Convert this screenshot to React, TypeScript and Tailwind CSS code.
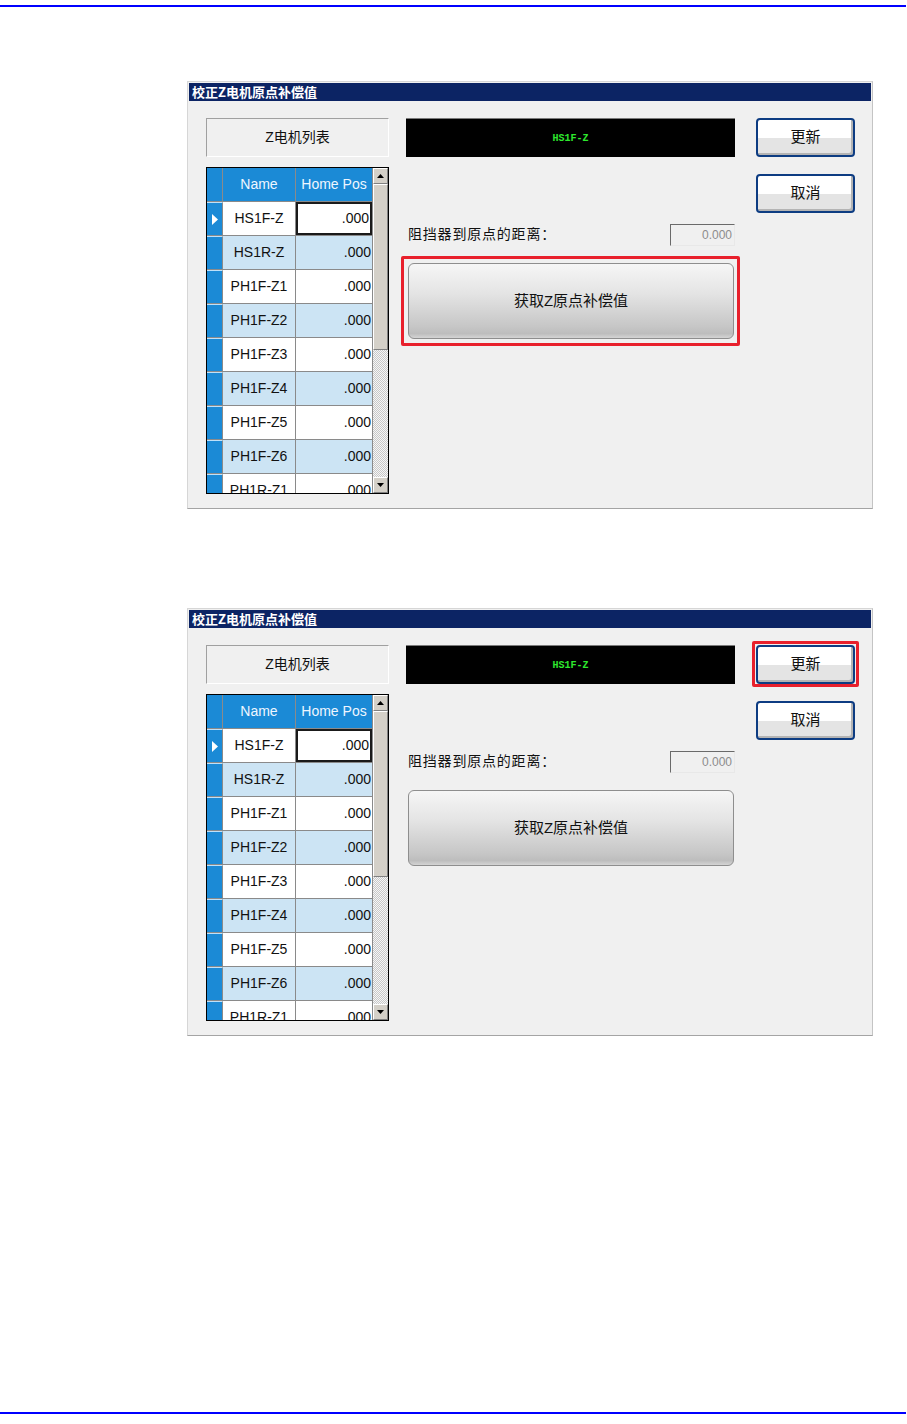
import React from "react";

const CJK = "font-['Liberation_Sans','Noto_Sans_CJK_SC',sans-serif]";

const rows = [
  "HS1F-Z",
  "HS1R-Z",
  "PH1F-Z1",
  "PH1F-Z2",
  "PH1F-Z3",
  "PH1F-Z4",
  "PH1F-Z5",
  "PH1F-Z6",
  "PH1R-Z1",
];

function Arrow({ up }: { up: boolean }) {
  return (
    <div className="h-[16px] w-full shrink-0 bg-[#d4d0c8] border border-t-white border-l-white border-r-[#808080] border-b-[#808080] flex items-center justify-center">
      <svg width="7" height="4" viewBox="0 0 7 4">
        {up ? <polygon points="3.5,0 7,4 0,4" fill="#000" /> : <polygon points="0,0 7,0 3.5,4" fill="#000" />}
      </svg>
    </div>
  );
}

function Grid() {
  return (
    <div className="w-[183px] h-[327px] border border-black flex overflow-hidden bg-white">
      <div className="flex-1 flex flex-col overflow-hidden">
        <div className="h-[34px] shrink-0 flex border-b border-[#8a8a8a]">
          <div className="w-[16px] shrink-0 bg-[#1b8ad6] border-r border-[#8a8a8a]" />
          <div className="w-[73px] shrink-0 bg-[#1b8ad6] border-r border-[#8a8a8a] flex items-center justify-center text-[14px] text-[#eef6ff] font-['Liberation_Sans',sans-serif]">
            Name
          </div>
          <div className="flex-1 bg-[#1b8ad6] flex items-center justify-center text-[14px] text-[#eef6ff] font-['Liberation_Sans',sans-serif] whitespace-nowrap">
            Home Pos
          </div>
        </div>
        {rows.map((r, i) => {
          const blue = i % 2 === 1;
          return (
            <div key={r} className="h-[34px] shrink-0 flex border-b border-[#8a8a8a]">
              <div className="w-[16px] shrink-0 bg-[#1b8ad6] border-r border-[#8a8a8a] border-t border-t-[#bfe0f8] flex items-center justify-center">
                {i === 0 && (
                  <svg width="6" height="11" viewBox="0 0 6 11">
                    <polygon points="0,0 6,5.5 0,11" fill="#fff" />
                  </svg>
                )}
              </div>
              <div
                className={`w-[73px] shrink-0 border-r border-[#8a8a8a] flex items-center justify-center text-[14px] text-[#111] font-['Liberation_Sans',sans-serif] ${
                  blue ? "bg-[#cce4f4]" : "bg-white"
                }`}
              >
                {r}
              </div>
              <div
                className={`flex-1 flex items-center justify-end pr-[1px] text-[14px] text-[#111] font-['Liberation_Sans',sans-serif] ${
                  blue ? "bg-[#cce4f4]" : "bg-white"
                } ${i === 0 ? "border-2 border-[#1a1a1a]" : ""}`}
              >
                .000
              </div>
            </div>
          );
        })}
      </div>
      <div className="w-[16px] shrink-0 flex flex-col border-l border-[#8a8a8a] bg-[repeating-conic-gradient(#c8c8c8_0_25%,#f6f6f6_0_50%)] bg-[length:2px_2px]">
        <Arrow up />
        <div className="h-[166px] shrink-0 bg-[#d4d0c8] border border-t-white border-l-white border-r-[#808080] border-b-[#808080]" />
        <div className="flex-1" />
        <Arrow up={false} />
      </div>
    </div>
  );
}

function SmallButton({ label, highlight }: { label: string; highlight?: boolean }) {
  return (
    <div className="relative w-[99px] h-[39px]">
      <div
        className={`w-full h-full rounded-[4px] border-2 border-[#0d3c82] bg-[linear-gradient(#ffffff_0,#ffffff_52%,#e4e4e4_52%,#e4e4e4_100%)] shadow-[inset_-2px_-2px_0_#b4b4b4] flex items-center justify-center text-[15px] text-[#111] ${CJK}`}
      >
        {label}
      </div>
      {highlight && (
        <div className="absolute left-[-4px] right-[-4px] top-[-4px] bottom-[-3px] border-[3px] border-[#e8202c] rounded-[2px]" />
      )}
    </div>
  );
}

function Dialog({ hlBig, hlUpdate }: { hlBig?: boolean; hlUpdate?: boolean }) {
  return (
    <div className="w-[686px] h-[428px] border border-[#d6d6d6] border-b-[#a4a4a4] border-r-[#c4c4c4] bg-[#f0f0f0] p-[1px] flex flex-col">
      <div className="h-[18px] shrink-0 bg-[#0c2464] flex items-center pl-[3px] pb-[2px] text-[13px] font-bold text-white font-['Noto_Sans_CJK_SC',sans-serif] leading-none">
        校正Z电机原点补偿值
      </div>
      <div className="flex pl-[17px] pt-[17px]">
        <div className="w-[183px] shrink-0 flex flex-col gap-[10px]">
          <div
            className={`h-[39px] border border-t-[#a0a0a0] border-l-[#a0a0a0] border-r-white border-b-white flex items-center justify-center text-[14px] text-[#111] ${CJK}`}
          >
            Z电机列表
          </div>
          <Grid />
        </div>
        <div className="w-[329px] shrink-0 ml-[17px] flex flex-col">
          <div className="h-[39px] bg-black border-t border-[#7a7a7a] flex items-center justify-center text-[10px] font-bold text-[#2ee82e] font-['Liberation_Mono',monospace]">
            HS1F-Z
          </div>
          <div className="mt-[67px] h-[22px] flex items-center justify-between">
            <div className="pl-[2px] pb-[4px] text-[14px] text-[#111] font-['Noto_Sans_CJK_SC',sans-serif] tracking-[0.8px]">
              阻挡器到原点的距离：
            </div>
            <div className="w-[65px] h-[22px] border border-t-[#6a6a6a] border-l-[#6a6a6a] border-r-[#e8e8e8] border-b-[#e8e8e8] bg-[#f0f0f0] flex items-center justify-end pr-[2px] text-[12px] text-[#8c8c8c] font-['Liberation_Sans',sans-serif]">
              0.000
            </div>
          </div>
          <div className="mt-[17px] ml-[2px] mr-[1px] relative h-[76px]">
            <div
              className={`h-full rounded-[6px] border border-[#8e8e8e] bg-[linear-gradient(#f6f6f6_0%,#e4e4e4_40%,#c6c6c6_85%,#bdbdbd_94%,#d4d4d4_100%)] flex items-center justify-center text-[15px] text-[#111] ${CJK}`}
            >
              获取Z原点补偿值
            </div>
            {hlBig && (
              <div className="absolute left-[-7px] right-[-6px] top-[-7px] bottom-[-7px] border-[3px] border-[#e8202c] rounded-[2px]" />
            )}
          </div>
        </div>
        <div className="w-[99px] shrink-0 ml-[21px] flex flex-col gap-[17px]">
          <SmallButton label="更新" highlight={hlUpdate} />
          <SmallButton label="取消" />
        </div>
      </div>
    </div>
  );
}

export default function App() {
  return (
    <div className="w-[907px] h-[1424px] bg-white flex flex-col">
      <div className="mt-[5px] h-[2px] w-[906px] bg-[#0000ff]" />
      <div className="ml-[187px] mt-[74px]">
        <Dialog hlBig />
      </div>
      <div className="ml-[187px] mt-[99px]">
        <Dialog hlUpdate />
      </div>
      <div className="mt-[376px] h-[2px] w-[906px] bg-[#0000ff]" />
    </div>
  );
}
